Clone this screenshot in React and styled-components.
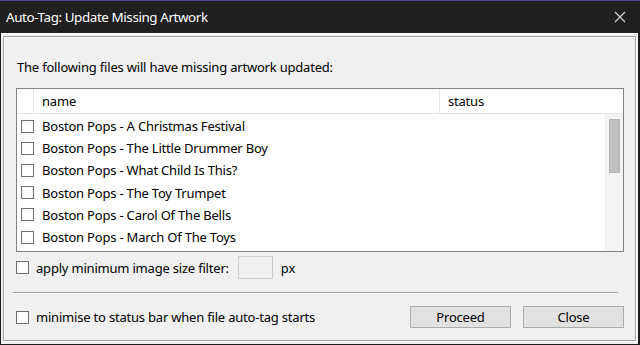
import styled, { createGlobalStyle } from 'styled-components'

const Global = createGlobalStyle`
  html, body { margin: 0; padding: 0; background: #1c1c1c; }
  * { box-sizing: border-box; }
`

const FONT = `"Noto Sans", "Open Sans", sans-serif`

const Window = styled.div`
  width: 640px;
  height: 345px;
  display: flex;
  flex-direction: column;
  font-family: ${FONT};
  font-size: 13px;
  letter-spacing: -0.2px;
  color: #000;
  background: #1c1c1c;
`

const TitleBar = styled.div`
  height: 33px;
  flex: none;
  display: flex;
  align-items: center;
  justify-content: space-between;
  padding: 0 14px 0 6px;
  background: #202020;
  border-top: 1px solid #4a478f;
  color: #ffffff;
  font-size: 13.4px;
  letter-spacing: -0.4px;
`

const CloseX = styled.svg`
  width: 12px;
  height: 12px;
`

const Body = styled.div`
  flex: 1;
  display: flex;
  background: #f0f0f0;
  margin: 0 2px 1px 1px;
  padding: 2px 2px 3px 2px;
  border-top: 1px solid #ffffff;
`

const Panel = styled.div`
  flex: 1;
  display: flex;
  flex-direction: column;
  border: 1px solid #a0a0a0;
  box-shadow: inset 1px 1px 0 #ffffff, 1px 1px 0 #ffffff;
  padding: 0 11px 0 12px;
`

const Intro = styled.div`
  height: 16px;
  line-height: 16px;
  margin-top: 22px;
  padding-left: 1px;
`

const List = styled.div`
  margin-top: 13px;
  height: 164px;
  border: 1px solid #828282;
  background: #ffffff;
  display: flex;
  flex-direction: column;
`

const Header = styled.div`
  height: 25px;
  flex: none;
  display: grid;
  grid-template-columns: 17px 406px 1fr;
  border-bottom: 1px solid #e5e5e5;
`

const HeadCell = styled.div`
  border-right: ${p => (p.last ? 'none' : '1px solid #e5e5e5')};
  padding-left: 8px;
  line-height: 24px;
`

const Rows = styled.div`
  flex: 1;
  display: flex;
  padding-top: 1px;
  overflow: hidden;
`

const RowList = styled.div`
  flex: 1;
`

const Row = styled.div`
  height: 22.2px;
  display: flex;
  align-items: center;
  padding-left: 4px;
  gap: 8px;
`

const Box = styled.span`
  width: 13px;
  height: 13px;
  flex: none;
  border: 1px solid #6f6f6f;
  background: #ffffff;
`

const ScrollTrack = styled.div`
  width: 18px;
  flex: none;
  background: #f4f4f4;
  border-left: 1px solid #f0f0f0;
  padding: 5px 3px 0 3px;
  margin-top: -1px;
`

const Thumb = styled.div`
  height: 54px;
  background: #c0c0c0;
  border: 1px solid #b4b4b4;
`

const FilterRow = styled.div`
  height: 23px;
  margin-top: 4px;
  display: flex;
  align-items: center;
  gap: 7px;
`

const SizeInput = styled.div`
  width: 35px;
  height: 23px;
  border: 1px solid #cccccc;
  background: #f0f0f0;
  margin: 0 1px 0 2px;
`

const Sep = styled.div`
  height: 2px;
  margin: 13px 6px 0 -3px;
  border-top: 1px solid #a0a0a0;
  border-bottom: 1px solid #ffffff;
`

const BottomRow = styled.div`
  margin-top: 12px;
  height: 22px;
  display: flex;
  align-items: center;
  gap: 7px;
`

const Spacer = styled.div`
  flex: 1;
`

const Button = styled.button`
  all: unset;
  box-sizing: border-box;
  width: ${p => p.w}px;
  height: 22px;
  margin-left: ${p => p.gap || 0}px;
  background: #e1e1e1;
  border: 1px solid #adadad;
  text-align: center;
  line-height: 20px;
  font-family: ${FONT};
  font-size: 13px;
  letter-spacing: -0.2px;
  color: #000;
`

const tracks = [
  'Boston Pops - A Christmas Festival',
  'Boston Pops - The Little Drummer Boy',
  'Boston Pops - What Child Is This?',
  'Boston Pops - The Toy Trumpet',
  'Boston Pops - Carol Of The Bells',
  'Boston Pops - March Of The Toys',
]

export default function App() {
  return (
    <>
      <Global />
      <Window>
        <TitleBar>
          <span>Auto-Tag: Update Missing Artwork</span>
          <CloseX viewBox="0 0 12 12">
            <path d="M1 1 L11 11 M11 1 L1 11" stroke="#c8c8c8" strokeWidth="1.4" fill="none" />
          </CloseX>
        </TitleBar>
        <Body>
          <Panel>
            <Intro>The following files will have missing artwork updated:</Intro>
            <List>
              <Header>
                <HeadCell />
                <HeadCell>name</HeadCell>
                <HeadCell last>status</HeadCell>
              </Header>
              <Rows>
                <RowList>
                  {tracks.map(t => (
                    <Row key={t}>
                      <Box />
                      <span>{t}</span>
                    </Row>
                  ))}
                </RowList>
                <ScrollTrack>
                  <Thumb />
                </ScrollTrack>
              </Rows>
            </List>
            <FilterRow>
              <Box />
              <span>apply minimum image size filter:</span>
              <SizeInput />
              <span>px</span>
            </FilterRow>
            <Sep />
            <BottomRow>
              <Box />
              <span>minimise to status bar when file auto-tag starts</span>
              <Spacer />
              <Button w={101}>Proceed</Button>
              <Button w={101} gap={5}>Close</Button>
            </BottomRow>
          </Panel>
        </Body>
      </Window>
    </>
  )
}
